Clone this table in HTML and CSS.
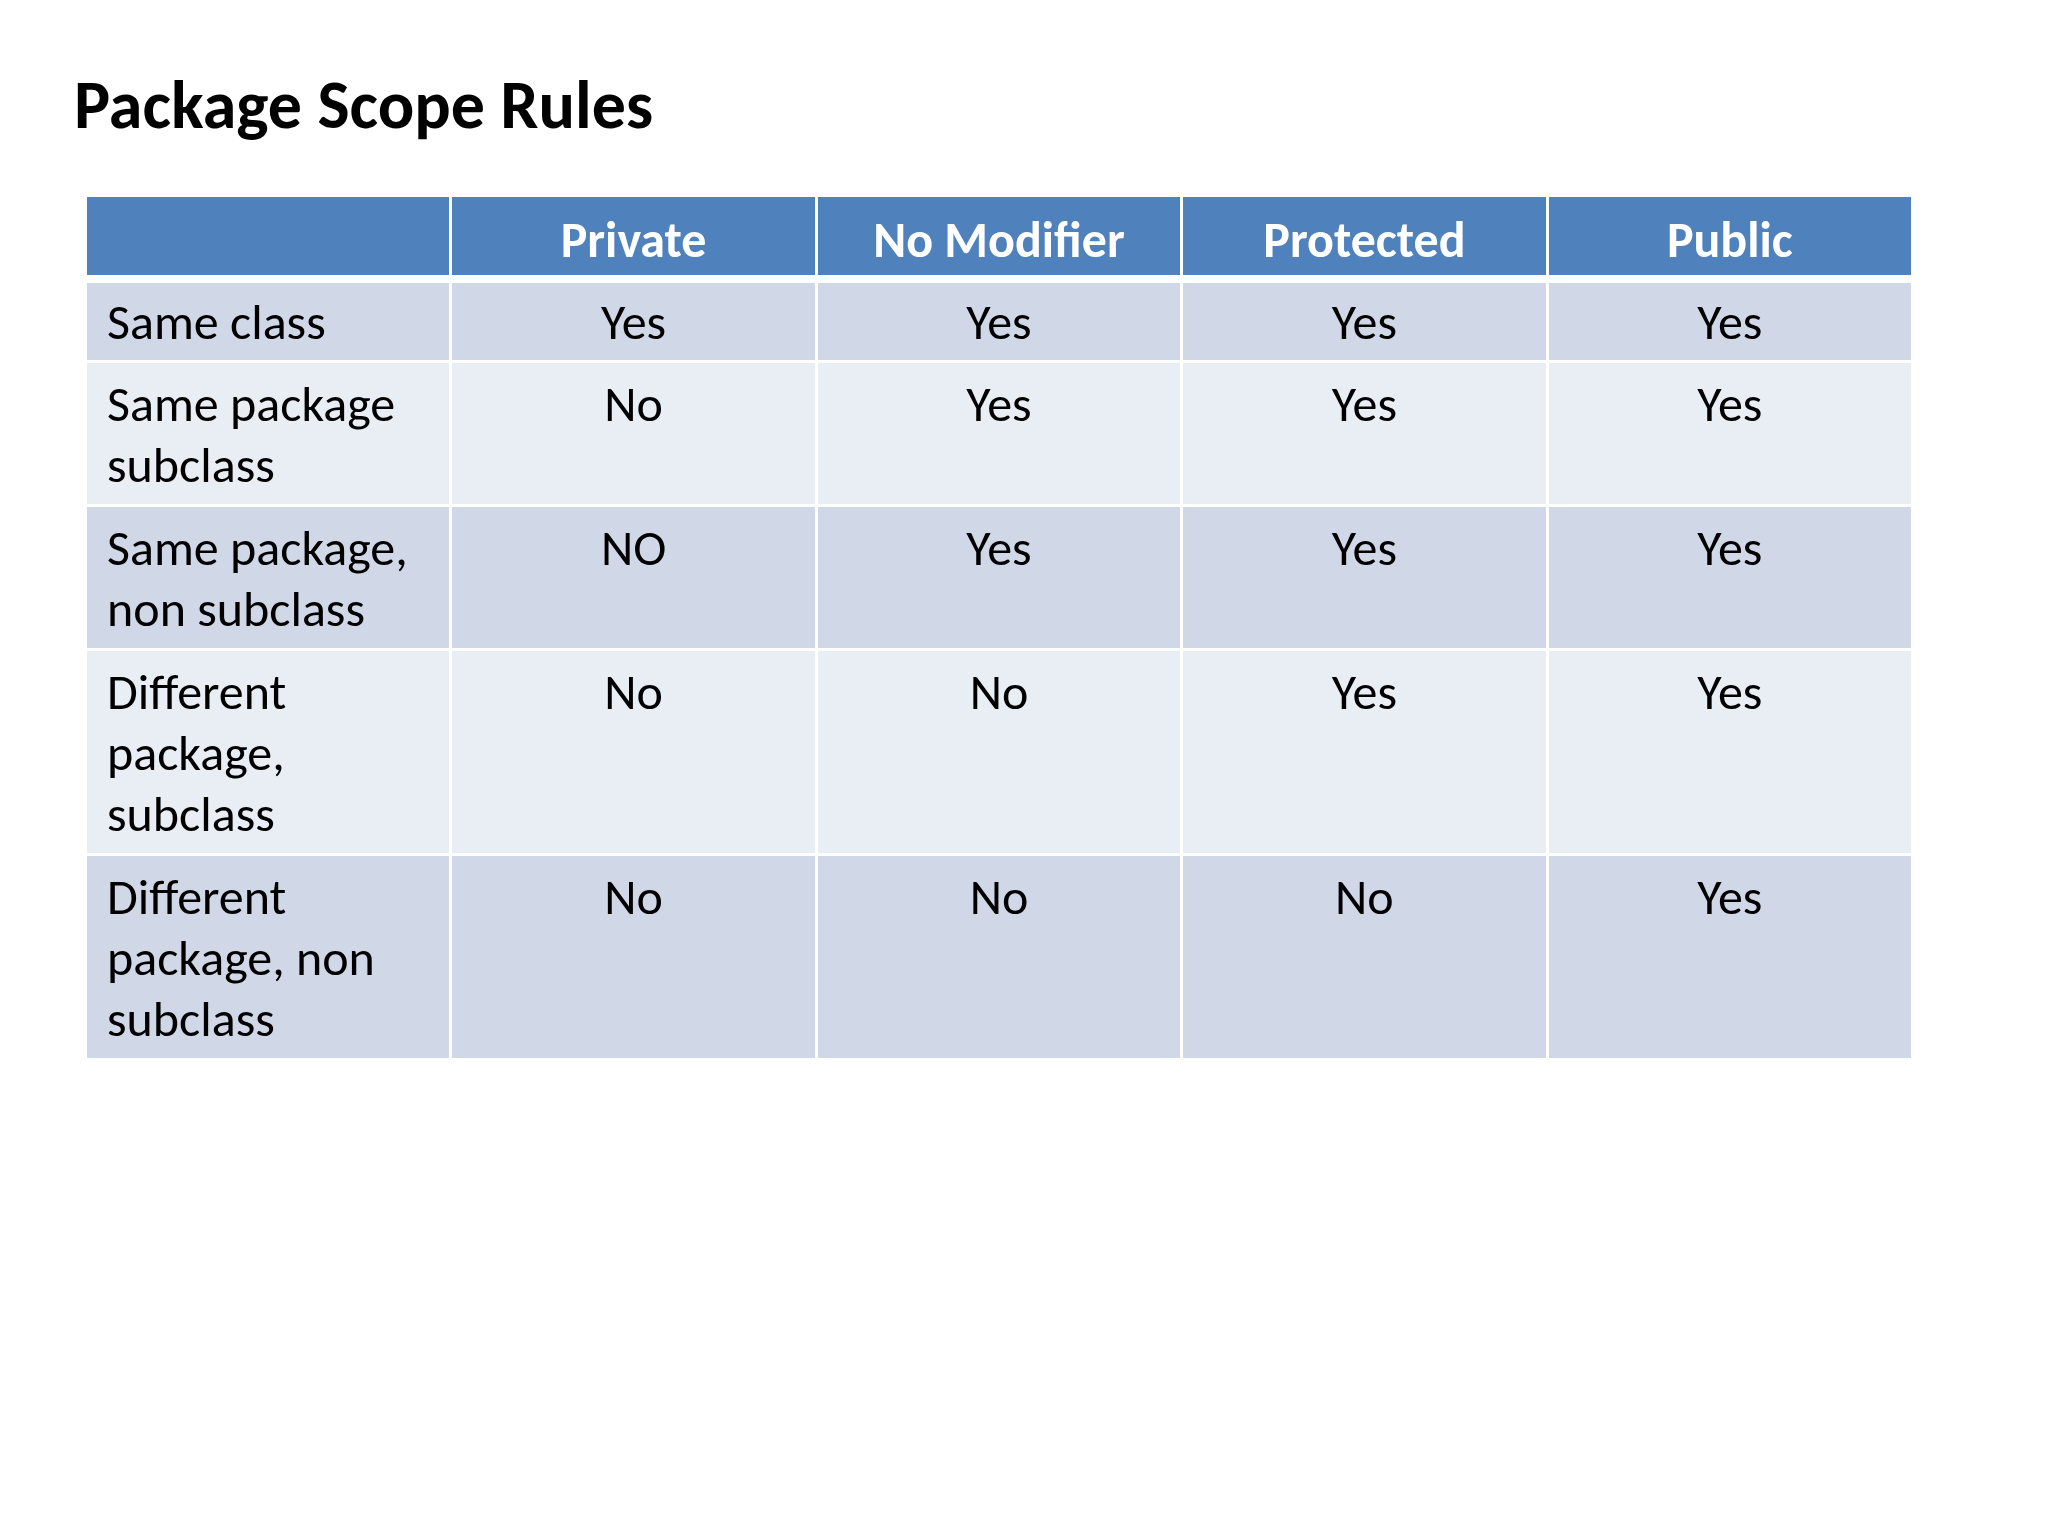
FILE: index.html
```html
<!DOCTYPE html>
<html lang="en">
<head>
<meta charset="utf-8">
<title>Package Scope Rules</title>
<link rel="stylesheet" href="styles.css">
</head>
<body>
<main class="slide">
  <h1 class="title">Package Scope Rules</h1>
  <table class="scope">
    <thead>
      <tr>
        <th></th>
        <th>Private</th>
        <th>No Modifier</th>
        <th>Protected</th>
        <th>Public</th>
      </tr>
    </thead>
    <tbody>
      <tr class="band1 single">
        <td class="label">Same class</td>
        <td>Yes</td><td>Yes</td><td>Yes</td><td>Yes</td>
      </tr>
      <tr class="band2">
        <td class="label">Same package subclass</td>
        <td>No</td><td>Yes</td><td>Yes</td><td>Yes</td>
      </tr>
      <tr class="band1">
        <td class="label">Same package, non subclass</td>
        <td>NO</td><td>Yes</td><td>Yes</td><td>Yes</td>
      </tr>
      <tr class="band2">
        <td class="label">Different package, subclass</td>
        <td>No</td><td>No</td><td>Yes</td><td>Yes</td>
      </tr>
      <tr class="band1">
        <td class="label">Different package, non subclass</td>
        <td>No</td><td>No</td><td>No</td><td>Yes</td>
      </tr>
    </tbody>
  </table>
</main>
</body>
</html>
```

FILE: styles.css
```css
html, body {
  margin: 0;
  padding: 0;
  background: #ffffff;
}

body {
  font-family: Carlito, Calibri, "Open Sans", "Liberation Sans", sans-serif;
  color: #000000;
}

.slide {
  width: 2048px;
  height: 1536px;
  box-sizing: border-box;
  padding: 61px 0 0 0;
}

.title {
  margin: 0 0 45px 74px;
  font-size: 68px;
  line-height: 88px;
  font-weight: 700;
}

.scope {
  margin-left: 84px;
  width: 1830px;
  table-layout: fixed;
  border-collapse: collapse;
  font-size: 50px;
  line-height: 61px;
}

.scope th,
.scope td {
  border: 3px solid #ffffff;
  padding: 10px 20px 9px;
  vertical-align: top;
  text-align: center;
  font-weight: 400;
}

.scope thead th {
  background: #4f81bd;
  color: #ffffff;
  font-weight: 700;
  border-bottom: 8px solid #ffffff;
  padding-top: 12px;
  padding-bottom: 5px;
}

.scope tr.single td {
  padding-top: 8px;
  padding-bottom: 8px;
}

.scope td.label {
  text-align: left;
}

.band1 td {
  background: #d0d8e8;
}

.band2 td {
  background: #e9edf4;
}
```
